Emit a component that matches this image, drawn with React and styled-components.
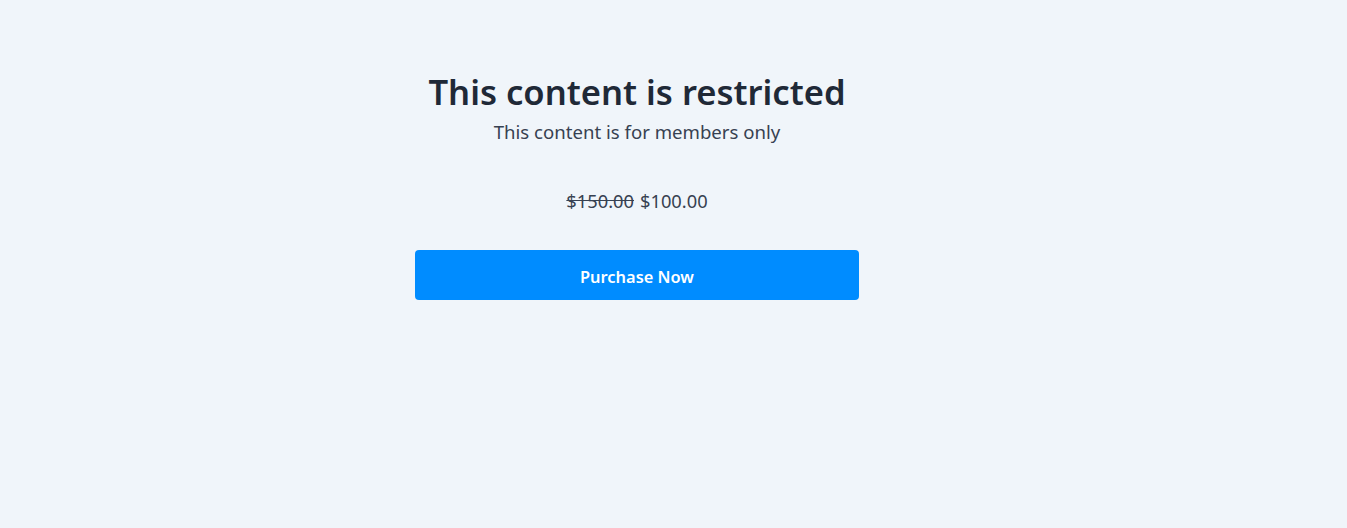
import React from "react";
import styled, { createGlobalStyle } from "styled-components";

const GlobalStyle = createGlobalStyle`
  html, body {
    margin: 0;
    padding: 0;
    background: #f0f5fa;
  }
  body {
    font-family: "Noto Sans", "Open Sans", sans-serif;
  }
`;

const Page = styled.div`
  width: 1274px;
  min-height: 528px;
  display: flex;
  flex-direction: column;
  align-items: center;
  padding-top: 70px;
  box-sizing: border-box;
`;

const Title = styled.h1`
  margin: 0;
  font-size: 34.6px;
  line-height: 43px;
  font-weight: 600;
  color: #1f2937;
`;

const Subtitle = styled.p`
  margin: 5px 0 0;
  font-size: 18.6px;
  line-height: 27px;
  color: #374151;
`;

const Price = styled.div`
  margin-top: 42px;
  font-size: 18.3px;
  line-height: 27px;
  color: #374151;

  s {
    margin-right: 6px;
  }
`;

const PurchaseButton = styled.button`
  margin-top: 36px;
  width: 444px;
  height: 50px;
  padding-top: 3px;
  border: none;
  border-radius: 4px;
  background: #008cff;
  color: #fff;
  font-family: inherit;
  font-size: 16.4px;
  font-weight: 600;
  cursor: pointer;
`;

const App = () => {
  return (
    <Page>
      <GlobalStyle />
      <Title>This content is restricted</Title>
      <Subtitle>This content is for members only</Subtitle>
      <Price>
        <s>$150.00</s>$100.00
      </Price>
      <PurchaseButton>Purchase Now</PurchaseButton>
    </Page>
  );
};

export default App;
